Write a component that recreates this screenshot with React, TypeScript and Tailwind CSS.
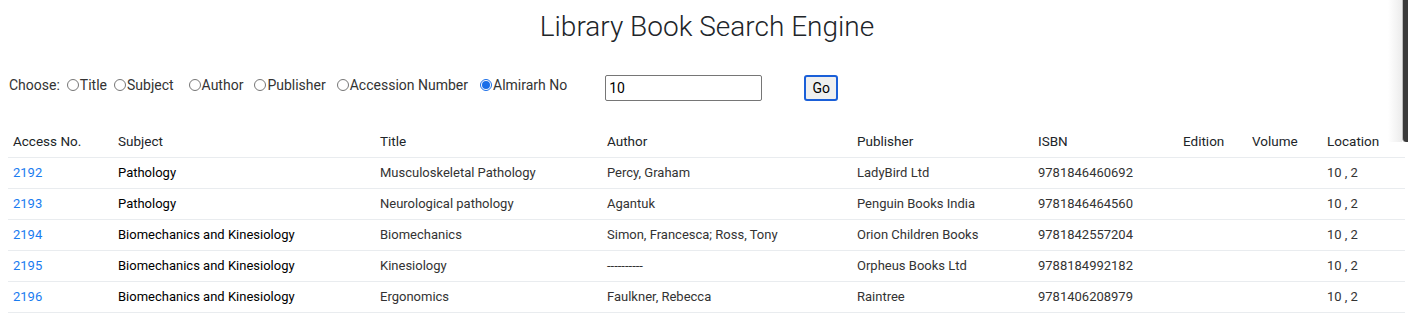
import React from "react";

const books = [
  { no: "2192", subject: "Pathology", title: "Musculoskeletal Pathology", author: "Percy, Graham", publisher: "LadyBird Ltd", isbn: "9781846460692" },
  { no: "2193", subject: "Pathology", title: "Neurological pathology", author: "Agantuk", publisher: "Penguin Books India", isbn: "9781846464560" },
  { no: "2194", subject: "Biomechanics and Kinesiology", title: "Biomechanics", author: "Simon, Francesca; Ross, Tony", publisher: "Orion Children Books", isbn: "9781842557204" },
  { no: "2195", subject: "Biomechanics and Kinesiology", title: "Kinesiology", author: "----------", publisher: "Orpheus Books Ltd", isbn: "9788184992182" },
  { no: "2196", subject: "Biomechanics and Kinesiology", title: "Ergonomics", author: "Faulkner, Rebecca", publisher: "Raintree", isbn: "9781406208979" },
];

const options = [
  { label: "Title", gap: "mr-[7px]" },
  { label: "Subject", gap: "mr-[15px]" },
  { label: "Author", gap: "mr-[11px]" },
  { label: "Publisher", gap: "mr-[11px]" },
  { label: "Accession Number", gap: "mr-[12px]" },
  { label: "Almirarh No", gap: "" },
];

function Radio({ checked }: { checked?: boolean }) {
  return checked ? (
    <span className="mr-px inline-flex h-[12px] w-[12px] items-center justify-center rounded-full border border-[#1a6ee8] bg-white">
      <span className="h-[8px] w-[8px] rounded-full bg-[#1a6ee8]" />
    </span>
  ) : (
    <span className="mr-px inline-block h-[12px] w-[12px] rounded-full border border-[#767676] bg-white" />
  );
}

export default function App() {
  return (
    <div className="relative h-[319px] overflow-hidden bg-white font-['Roboto',sans-serif] text-[#212529]">
      <h1 className="pl-[6px] pt-[10px] text-center text-[28px] font-light leading-[34px]">Library Book Search Engine</h1>

      <div className="mt-[26px] flex h-[30px] items-center pl-[9px] text-[14px]">
        <span className="mr-[7px] text-[#333]">Choose:</span>
        {options.map((o) => (
          <label key={o.label} className={`flex items-center text-[#333] ${o.gap}`}>
            <Radio checked={o.label === "Almirarh No"} />
            {o.label}
          </label>
        ))}
        <input
          className="ml-[38px] mt-[6px] h-[26px] w-[157px] rounded-[2px] border border-[#767676] px-[3px] text-[14px] text-black"
          defaultValue="10"
        />
        <button className="ml-[42px] mt-[6px] h-[26px] w-[34px] rounded-[3px] border-2 border-[#1a5fd8] bg-[#efefef] text-[14px] text-black">
          Go
        </button>
      </div>

      <table className="ml-[8px] mt-[25px] w-[1397px] table-fixed border-collapse text-[13px]">
        <colgroup>
          <col className="w-[105px]" />
          <col className="w-[262px]" />
          <col className="w-[227px]" />
          <col className="w-[250px]" />
          <col className="w-[181px]" />
          <col className="w-[145px]" />
          <col className="w-[69px]" />
          <col className="w-[75px]" />
          <col />
        </colgroup>
        <thead>
          <tr className="h-[32px] text-left text-[13.5px]">
            {["Access No.", "Subject", "Title", "Author", "Publisher", "ISBN", "Edition", "Volume", "Location"].map((h) => (
              <th key={h} className="pl-[5px] font-normal">
                {h}
              </th>
            ))}
          </tr>
        </thead>
        <tbody>
          {books.map((b) => (
            <tr key={b.no} className="h-[31px] border-t border-b border-[#e9ecef] text-[#333]">
              <td className="pl-[5px] text-[#1a7cf0]">{b.no}</td>
              <td className="pl-[5px] text-black">{b.subject}</td>
              <td className="pl-[5px]">{b.title}</td>
              <td className="pl-[5px]">{b.author}</td>
              <td className="pl-[5px]">{b.publisher}</td>
              <td className="pl-[5px]">{b.isbn}</td>
              <td className="pl-[5px]"></td>
              <td className="pl-[5px]"></td>
              <td className="pl-[5px]">10 , 2</td>
            </tr>
          ))}
        </tbody>
      </table>

      <div className="absolute right-0 top-0 flex h-[142px]">
        <div className="w-[14px] bg-gradient-to-r from-white to-[#ececec]" />
        <div className="w-[6px] rounded-bl-[4px] border-l border-[#bbb] bg-[#3a3a3a]" />
      </div>
    </div>
  );
}
